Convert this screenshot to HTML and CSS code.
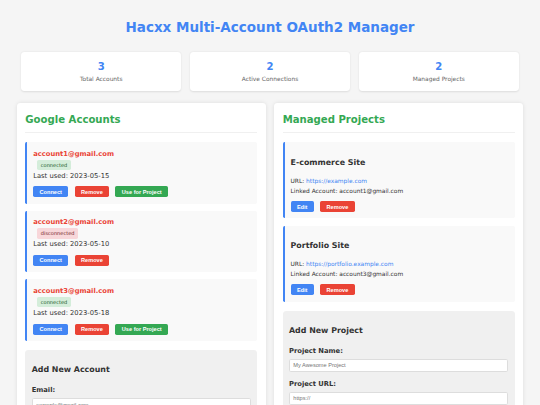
FILE: index.html
```html
<!DOCTYPE html>
<html lang="en">
<head>
<meta charset="utf-8">
<title>Hacxx Multi-Account OAuth2 Manager</title>
<link rel="stylesheet" href="styles.css">
</head>
<body>
<div class="container">
  <h1 class="title">Hacxx Multi-Account OAuth2 Manager</h1>

  <div class="stats">
    <div class="stat"><div class="stat-num">3</div><div class="stat-label">Total Accounts</div></div>
    <div class="stat"><div class="stat-num">2</div><div class="stat-label">Active Connections</div></div>
    <div class="stat"><div class="stat-num">2</div><div class="stat-label">Managed Projects</div></div>
  </div>

  <div class="columns">
    <section class="panel">
      <h2 class="panel-title">Google Accounts</h2>

      <div class="card">
        <div class="account-email">account1@gmail.com</div>
        <div class="status-row"><span class="status connected">connected</span></div>
        <div class="last-used">Last used: 2023-05-15</div>
        <div class="actions">
          <button class="btn btn-blue">Connect</button>
          <button class="btn btn-red">Remove</button>
          <button class="btn btn-green">Use for Project</button>
        </div>
      </div>

      <div class="card">
        <div class="account-email">account2@gmail.com</div>
        <div class="status-row"><span class="status disconnected">disconnected</span></div>
        <div class="last-used">Last used: 2023-05-10</div>
        <div class="actions">
          <button class="btn btn-blue">Connect</button>
          <button class="btn btn-red">Remove</button>
        </div>
      </div>

      <div class="card">
        <div class="account-email">account3@gmail.com</div>
        <div class="status-row"><span class="status connected">connected</span></div>
        <div class="last-used">Last used: 2023-05-18</div>
        <div class="actions">
          <button class="btn btn-blue">Connect</button>
          <button class="btn btn-red">Remove</button>
          <button class="btn btn-green">Use for Project</button>
        </div>
      </div>

      <div class="form">
        <h3 class="form-title">Add New Account</h3>
        <div class="group">
          <label class="label">Email:</label>
          <input class="input" type="text" placeholder="example@gmail.com">
        </div>
        <div class="group">
          <label class="label">Client ID:</label>
          <input class="input" type="text" placeholder="Your OAuth2 Client ID">
        </div>
      </div>
    </section>

    <section class="panel">
      <h2 class="panel-title">Managed Projects</h2>

      <div class="card">
        <h3 class="project-name">E-commerce Site</h3>
        <div class="meta">URL: <a class="link" href="#">https://example.com</a></div>
        <div class="meta">Linked Account: account1@gmail.com</div>
        <div class="actions">
          <button class="btn btn-blue">Edit</button>
          <button class="btn btn-red">Remove</button>
        </div>
      </div>

      <div class="card">
        <h3 class="project-name">Portfolio Site</h3>
        <div class="meta">URL: <a class="link" href="#">https://portfolio.example.com</a></div>
        <div class="meta">Linked Account: account3@gmail.com</div>
        <div class="actions">
          <button class="btn btn-blue">Edit</button>
          <button class="btn btn-red">Remove</button>
        </div>
      </div>

      <div class="form">
        <h3 class="form-title">Add New Project</h3>
        <div class="group">
          <label class="label">Project Name:</label>
          <input class="input" type="text" placeholder="My Awesome Project">
        </div>
        <div class="group">
          <label class="label">Project URL:</label>
          <input class="input" type="text" placeholder="https://">
        </div>
      </div>
    </section>
  </div>
</div>
</body>
</html>
```

FILE: styles.css
```css
body {
  margin: 0;
  padding: 8.44px;
  background: #f5f5f5;
  color: #333;
  font-family: "DejaVu Sans", Verdana, sans-serif;
  font-size: 6.75px;
  line-height: 1.6;
}

.container {
  max-width: 506.25px;
  margin: 0 auto;
}

.title {
  font-size: 13.5px;
  margin: 9.05px 0;
  text-align: center;
  color: #4285f4;
}

.stats {
  display: flex;
  margin-bottom: 8.44px;
}

.stat {
  flex: 1;
  margin: 4.22px;
  padding: 6.33px;
  background: #fff;
  border-radius: 3.4px;
  box-shadow: 0 0.85px 2.1px rgba(0, 0, 0, 0.1);
  text-align: center;
}

.stat-num {
  font-size: 10.125px;
  font-weight: bold;
  color: #4285f4;
}

.stat-label {
  font-size: 5.906px;
  color: #666;
}

.columns {
  display: grid;
  grid-template-columns: 1fr 1fr;
  gap: 8.44px;
  align-items: start;
}

.panel {
  background: #fff;
  border-radius: 3.4px;
  padding: 8.44px;
  box-shadow: 0 0.85px 4.2px rgba(0, 0, 0, 0.1);
}

.panel-title {
  font-size: 10.125px;
  margin: 0 0 9.28px;
  padding-bottom: 4.22px;
  border-bottom: 1px solid #f0f0f0;
  color: #34a853;
}

.card {
  background: #f9f9f9;
  border-left: 2px solid #4285f4;
  border-radius: 1.7px;
  padding: 6.33px 6.33px 6.33px 5.9px;
  margin-bottom: 7.17px;
}

.account-email {
  font-weight: bold;
  color: #ea4335;
}

.status {
  display: inline-block;
  margin-left: 4.22px;
  padding: 1.27px 3.38px;
  border-radius: 1.7px;
  font-size: 5.0625px;
}

.connected {
  background: #d4edda;
  color: #155724;
}

.disconnected {
  background: #f8d7da;
  color: #721c24;
}

.actions {
  display: flex;
  gap: 6.33px;
  margin-top: 5.06px;
}

.btn {
  font-family: "Liberation Sans", Arial, sans-serif;
  font-size: 5.625px;
  font-weight: bold;
  line-height: normal;
  padding: 2.53px 6.33px;
  border: none;
  border-radius: 1.7px;
  color: #fff;
}

.btn-blue {
  background: #4285f4;
}

.btn-red {
  background: #ea4335;
}

.btn-green {
  background: #34a853;
}

.project-name {
  font-size: 7.9px;
  margin: 7.9px 0;
}

.meta {
  font-size: 5.906px;
}

.link {
  color: #4285f4;
  text-decoration: none;
}

.form {
  background: #f0f0f0;
  border-radius: 3.4px;
  padding: 6.33px;
  margin-top: 9.28px;
}

.form-title {
  font-size: 7.9px;
  margin: 7.9px 0;
}

.group {
  margin-bottom: 6.33px;
}

.label {
  display: block;
  font-weight: bold;
  margin-bottom: 2.11px;
}

.input {
  display: block;
  width: 100%;
  box-sizing: border-box;
  padding: 2.9px 3.38px;
  border: 1px solid #ddd;
  border-radius: 1.7px;
  background: #fff;
  font-family: "Liberation Sans", Arial, sans-serif;
  font-size: 5.625px;
}
```
